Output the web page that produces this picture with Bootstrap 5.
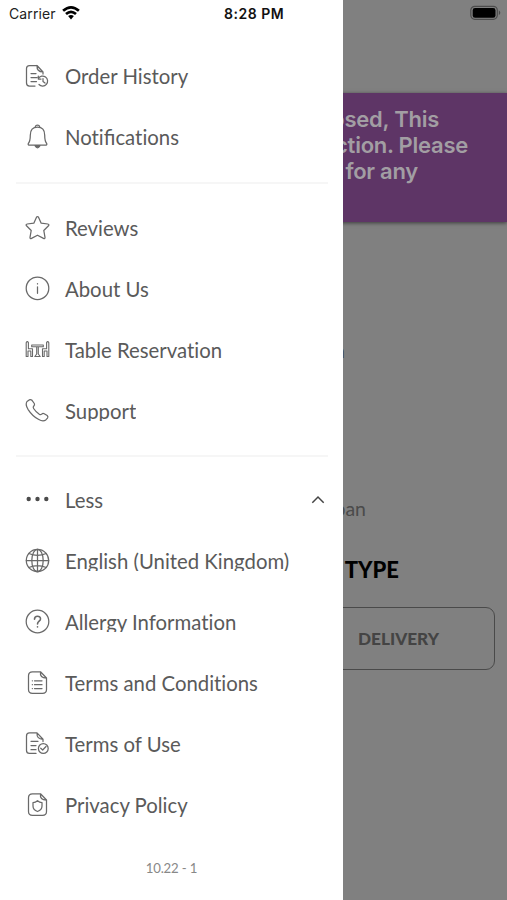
<!DOCTYPE html>
<html lang="en">
<head>
<meta charset="utf-8">
<meta name="viewport" content="width=device-width, initial-scale=1">
<title>Menu</title>
<link href="https://cdn.jsdelivr.net/npm/bootstrap@5.3.0/dist/css/bootstrap.min.css" rel="stylesheet">
<style>
html,body{height:900px;overflow:hidden}
body{font-family:Lato,sans-serif;background:#808080}
.screen{width:507px;height:900px;background:#808080}
.top-space{height:93px;padding:5px 6px 0 0}
.notice{height:129px;background:#5e3566;color:#a29ea3;font:600 22px/26px Inter,sans-serif;letter-spacing:-.25px;padding-top:13px;box-shadow:0 1px 4px rgba(0,0,0,.55);white-space:nowrap}
.ln1{padding-right:68px}.ln2{padding-right:39px}.ln3{padding-right:89px}
.hint{height:275px;padding:116px 162px 0 0;font-size:20px;line-height:24px;color:#444}
.place{height:24px;padding-right:141px;font-size:19.5px;line-height:24px;color:#4b4b4b}
.type-title{margin-top:35px;padding-right:108px;font-size:22px;line-height:28px;font-weight:900;color:#000}
.delivery{width:190px;height:63px;margin:23px 12px 0 auto;border:1px solid #4a4a4a;border-radius:9px;color:#444;font-size:17.2px;font-weight:900;padding:1px 3px 0 0}
.drawer{width:343px;height:900px;background:#fff;z-index:2}
.status{height:46px;padding:4px 0 0 9px;font:400 14px/20px Inter,sans-serif;color:#222}
.status .carrier{width:47px;letter-spacing:.1px}
.clock{margin-left:142px;font-weight:600;color:#111;letter-spacing:.5px}
.menu-row{height:61px;padding:0 17px 0 25px;gap:15px;color:#5a5a5a;font-size:20.35px;line-height:25px;font-variant-ligatures:none}
.lig{font-variant-ligatures:common-ligatures}
.menu-row svg{flex:none}
.menu-row .label{height:25px}
.menu-row .clip{height:22px;margin-bottom:3px;overflow:hidden}
.ic{width:25px;height:25px;overflow:visible;fill:none;stroke:#696969;stroke-width:1.25;stroke-linecap:round;stroke-linejoin:round}
.rule{height:2px;background:#f6f6f6;margin:14px 15px 13.5px 16px}
.rule-low{margin:13px 15px 13.5px 16px}
.version{height:24px;margin-top:20px;font-size:13.2px;line-height:24px;color:#888;letter-spacing:-.15px}
</style>
<script src="https://cdn.jsdelivr.net/npm/bootstrap@5.3.0/dist/js/bootstrap.bundle.min.js"></script>
</head>
<body>
<div class="screen position-relative overflow-hidden">
  <main class="text-end">
    <div class="top-space d-flex justify-content-end">
      <svg width="31" height="16" viewBox="0 0 31 16"><rect x=".8" y="1.3" width="26.5" height="13" rx="4" fill="none" stroke="#4c4c4c" stroke-width="1.2"/><rect x="2.7" y="3.1" width="22.8" height="9.6" rx="2.3"/><path d="M28.8 5.3q3 2.5 0 5z" fill="#4c4c4c"/></svg>
    </div>
    <div class="notice">
      <div class="ln1">closed, This</div><div class="ln2">ction. Please</div><div class="ln3">for any</div>
    </div>
    <div class="hint">n</div>
    <div class="place">ban</div>
    <div class="type-title">TYPE</div>
    <div class="delivery d-flex align-items-center justify-content-center">DELIVERY</div>
  </main>

  <nav class="drawer position-absolute top-0 start-0">
    <div class="status d-flex align-items-start">
      <span class="carrier">Carrier</span>
      <svg class="ms-1" width="22" height="20" viewBox="0 0 22 20" fill="none" stroke="#000" stroke-width="2.7"><path d="M3.1 6.8Q11 -.2 18.9 6.8"/><path d="M6 10.1Q11 5.7 16 10.1"/><path d="M8.1 12.1Q11 9.9 13.9 12.1L11 15.5Z" fill="#000" stroke="none"/></svg>
      <span class="clock">8:28 PM</span>
    </div>

    <div class="menu-row d-flex align-items-center">
      <svg class="ic" viewBox="0 0 25 25"><path d="M10 22H4.5Q1.5 22 1.5 19V4.5Q1.5 1.5 4.5 1.5H12L18 8V10M12 1.5Q11.6 7.8 18 8M6 9.5H11M6 13.5H12M6 17.5H11.5M13.3 14.5A5 5 0 1 1 14 20.5M13.3 12V15H16M18 14.5V17.5L20 19"/></svg><span class="label">Order History</span></div>
    <div class="menu-row d-flex align-items-center">
      <svg class="ic" viewBox="0 0 25 25"><path d="M10.3 2.2C9.8 -.6 15.2 -.6 14.7 2.2M3.3 18.5C5 16.5 5.3 14.6 5.3 10.2C5.3 5.2 8 2.2 12.5 2.2S19.7 5.2 19.7 10.2C19.7 14.6 20 16.5 21.7 18.5C22.3 19.6 21.3 20.2 20.5 20.2H4.5C3.7 20.2 2.7 19.6 3.3 18.5Z"/><path d="M10 20.7Q12.5 25 15 20.7Z" fill="#696969"/></svg><span class="label">Noti<span class="lig">fi</span>cations</span></div>

    <div class="rule"></div>

    <div class="menu-row d-flex align-items-center">
      <svg class="ic" viewBox="0 0 25 25"><path d="M11.5 1.2Q12.5 -.2 13.5 1.2L16.2 7.2L22.8 8Q24.6 8.5 23.5 9.8L18.8 14.5L20 21.4Q20 23.1 18.5 22.4L12.5 19.2L6.5 22.4Q5 23.1 5 21.4L6.2 14.5L1.5 9.8Q.4 8.5 2.2 8L8.8 7.2Z"/></svg><span class="label">Reviews</span></div>
    <div class="menu-row d-flex align-items-center">
      <svg class="ic" viewBox="0 0 25 25"><circle cx="12.5" cy="11.3" r="11.3"/><path d="M12.5 9.8V16.3M12.5 6.5V6.9"/></svg><span class="label">About Us</span></div>
    <div class="menu-row d-flex align-items-center">
      <svg class="ic" viewBox="0 0 25 25"><path d="M1.2 4.5Q2.3 2.8 3.4 4.5V10.8H7.5V18.5M1.2 4.5V18.5H3V13H5.8V18.5H7.5M23.8 4.5Q22.7 2.8 21.6 4.5V10.8H17.5V18.5M23.8 4.5V18.5H22V13H19.2V18.5H17.5M6.7 7H18.3V8.8H6.7ZM11.7 8.8V16L9.8 18.5H15.2L13.3 16V8.8" stroke-width="1.1"/></svg><span class="label">Table Reservation</span></div>
    <div class="menu-row d-flex align-items-center">
      <svg class="ic" viewBox="0 0 25 25"><path d="M2 2.5L4.2 .9Q5.7 0 7 1.3L9.3 4.5Q10 5.8 8.8 7Q7.7 8.1 8.6 9.5Q10.5 12.5 14.3 15.3Q15.6 16.2 16.7 15.1Q17.9 13.9 19.2 14.7L22.2 16.5Q23.5 17.8 22.5 19.1L20.8 20.9Q18 22.9 13.8 20.5Q7.3 17.1 3 10.3Q0 5.3 2 2.5Z"/></svg><span class="label clip">Support</span></div>

    <div class="rule rule-low"></div>

    <div class="menu-row d-flex align-items-center">
      <svg class="ic" viewBox="0 0 25 25"><g fill="#4b4b4b" stroke="none"><circle cx="3.7" cy="11" r="2.2"/><circle cx="12.5" cy="11" r="2.2"/><circle cx="21.3" cy="11" r="2.2"/></g></svg><span class="label">Less</span>
      <svg class="ms-auto" width="16" height="16" viewBox="0 0 16 16" fill="none" stroke="#444" stroke-width="1.5"><path d="M2.3 9.7L8 4L13.7 9.7"/></svg></div>
    <div class="menu-row d-flex align-items-center">
      <svg class="ic" viewBox="0 0 25 25"><circle cx="12.5" cy="11.5" r="11.2"/><path d="M1.3 11.5H23.7M12.5.3V22.7M3.8 4.5Q12.5 8.2 21.2 4.5M3.8 18.5Q12.5 14.8 21.2 18.5"/><ellipse cx="12.5" cy="11.5" rx="5.7" ry="11.2"/></svg><span class="label clip">English (United Kingdom)</span></div>
    <div class="menu-row d-flex align-items-center">
      <svg class="ic" viewBox="0 0 25 25"><circle cx="12.5" cy="11.5" r="11.3"/><path d="M9.5 9.3C9.5 5.2 15.7 5.4 15.5 9C15.4 11.2 12.5 11.3 12.5 14M12.5 16.7V17" stroke-width="1.6"/></svg><span class="label clip">Allergy Information</span></div>
    <div class="menu-row d-flex align-items-center">
      <svg class="ic" viewBox="0 0 25 25"><path d="M7.5.8H15.5L21.5 7V18.5Q21.5 22.3 17.5 22.3H7.5Q3.5 22.3 3.5 18.5V4.8Q3.5.8 7.5.8ZM15.5.8Q14.5 7 21.5 7M9.5 9.8H17M9.5 13.7H17M9.5 17.6H17M7.3 9.8H7.4M7.3 13.7H7.4M7.3 17.6H7.4"/></svg><span class="label">Terms and Conditions</span></div>
    <div class="menu-row d-flex align-items-center">
      <svg class="ic" viewBox="0 0 25 25"><path d="M11 21.4H4.5Q1.5 21.4 1.5 18.5V3.9Q1.5.9 4.5.9H12L18 7.3V9.5M12 .9Q11.6 7.2 18 7.3M6 9.3H13M6 13.5H11M6 17.7H11M15.7 16.2L17.7 18L21 14.5"/><circle cx="18.3" cy="16.5" r="4.9"/></svg><span class="label">Terms of Use</span></div>
    <div class="menu-row d-flex align-items-center">
      <svg class="ic" viewBox="0 0 25 25"><path d="M7.5.8H15.5L21.5 7V18.5Q21.5 22.3 17.5 22.3H7.5Q3.5 22.3 3.5 18.5V4.8Q3.5.8 7.5.8ZM15.5.8Q14.5 7 21.5 7M12.5 7.7Q14.5 9.5 17 9.5V13Q17 17 12.5 18.5Q8 17 8 13V9.5Q10.5 9.5 12.5 7.7Z"/></svg><span class="label">Privacy Policy</span></div>
    <div class="version text-center">10.22 - 1</div>
  </nav>
</div>
</body>
</html>
